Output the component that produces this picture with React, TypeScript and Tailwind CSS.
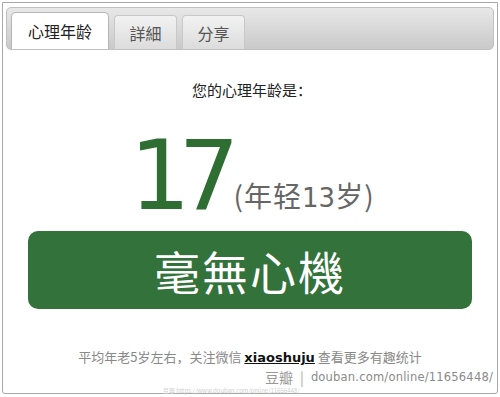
import React from 'react';

const cjk = "font-['Noto_Sans_CJK_SC','Noto_Sans_CJK_TC',sans-serif]";

function Tab({ label, active }: { label: string; active?: boolean }) {
  return (
    <div
      className={
        active
          ? 'h-[37px] w-[98px] flex items-center justify-center rounded-t-[5px] bg-white border border-b-0 border-[#b5b5b5] text-[16px] text-[#222]'
          : 'h-[34px] w-[63px] flex items-center justify-center rounded-t-[4px] bg-gradient-to-b from-[#f2f2f2] to-[#dcdcdc] border border-b-0 border-[#c8c8c8] text-[16px] text-[#555]'
      }
    >
      {label}
    </div>
  );
}

export default function App() {
  return (
    <div className={`w-[500px] h-[397px] bg-white p-[2px] pb-[2px] ${cjk}`}>
      <div className="relative h-[392px] border border-[#a8a8a8] rounded-b-[3px] flex flex-col">
        {/* tab header */}
        <div className="mx-[3px] mt-[4px] h-[43px] rounded-[5px] border border-[#c0c0c0] bg-gradient-to-b from-[#e8e8e8] to-[#c9c9c9] flex items-end gap-[5px] pl-[4px]">
          <Tab label="心理年龄" active />
          <Tab label="詳細" />
          <Tab label="分享" />
        </div>

        {/* body */}
        <div className="flex flex-col items-center">
          <div className="mt-[30px] text-[15px] leading-[20px] text-[#222] pl-[4px]">您的心理年龄是：</div>
          <div className="mt-[36px] flex items-end h-[80px] pl-[4px]">
            <span className="font-['DejaVu_Sans',sans-serif] text-[96px] leading-[80px] text-[#2f6e32] tracking-[-12px]">17</span>
            <span className="ml-[6px] mb-[2px] text-[28px] leading-[32px] text-[#666] tracking-[1px]">
              (年轻<span className="font-['DejaVu_Sans',sans-serif] text-[26px] tracking-[0px]">13</span>岁)
            </span>
          </div>
        </div>

        <div className="mx-[25px] mt-[15px] h-[78px] rounded-[10px] bg-[#33723a] flex items-center justify-center">
          <span className="text-white text-[46px] leading-none font-normal tracking-[2px] font-['Noto_Sans_CJK_TC',serif]">毫無心機</span>
        </div>

        <div className="mt-[40px] text-center text-[13px] leading-[16px] text-[#888]">
          平均年老5岁左右，关注微信{' '}
          <span className="font-['DejaVu_Sans',sans-serif] font-bold text-[13px] text-[#111] underline">xiaoshuju</span>{' '}
          查看更多有趣统计
        </div>

        {/* watermark */}
        <div className="absolute right-[4px] bottom-[5px] flex items-center gap-[7px] text-[14px] text-[#8a8a8a]">
          <span className="text-[#999]">豆瓣</span>
          <span className="text-[#aaa]">|</span>
          <span className="font-['DejaVu_Sans',sans-serif] text-[11.5px] tracking-[0.2px]">douban.com/online/11656448/</span>
        </div>
        <div className="absolute left-[160px] bottom-[-1px] text-[6px] leading-[7px] text-[#d0d0d0]">
          豆瓣 https://www.douban.com/online/11656448/
        </div>
      </div>
    </div>
  );
}
